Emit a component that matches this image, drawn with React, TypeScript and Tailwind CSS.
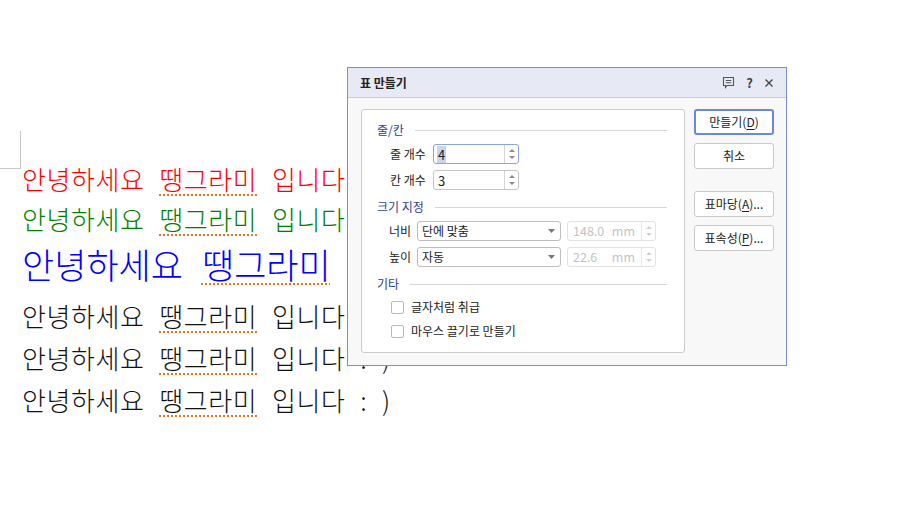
const docFont = { fontFamily: '"Noto Sans CJK KR", "Noto Sans", sans-serif' };

function DocLine({ color, size, className }: { color: string; size: string; className: string }) {
  return (
    <p className={`whitespace-nowrap pl-[22px] [word-spacing:0.32em] ${color} ${size} ${className}`}>
      안녕하세요{' '}
      <span className="underline decoration-dotted decoration-[#e8751a] decoration-[1.5px] underline-offset-[4px]">땡그라미</span>{' '}
      입니다 : )
    </p>
  );
}

function SpinBox({ value, focused }: { value: string; focused?: boolean }) {
  return (
    <div
      className={`flex h-[20px] w-[86px] items-stretch rounded-[3px] border bg-white ${
        focused ? 'border-[#8ea2dc]' : 'border-[#c4c4c4]'
      }`}
    >
      <div className="flex flex-1 items-center pl-[3px] text-[13px] leading-none text-[#222]">
        <span className={focused ? 'bg-[#c7d5f1] px-[1px] py-[2px]' : 'px-[1px]'}>{value}</span>
      </div>
      <SpinArrows />
    </div>
  );
}

function SpinArrows({ faint }: { faint?: boolean }) {
  const c = faint ? '#d0d0d0' : '#8a8a8a';
  return (
    <div className={`flex w-[14px] flex-col items-center justify-center gap-[4px] border-l ${faint ? 'border-[#e6e6e6]' : 'border-[#d4d4d4]'}`}>
      <svg width="6" height="3" viewBox="0 0 6 3"><path d="M0 3 L3 0 L6 3 Z" fill={c} /></svg>
      <svg width="6" height="3" viewBox="0 0 6 3"><path d="M0 0 L3 3 L6 0 Z" fill={c} /></svg>
    </div>
  );
}

function UnitBox({ value }: { value: string }) {
  return (
    <div className="ml-[6px] flex h-[20px] w-[89px] items-stretch rounded-[3px] border border-[#e2e2e2] bg-white">
      <div className="flex flex-1 items-center justify-between pl-[5px] pr-[6px] text-[12.5px] leading-none text-[#c4c4c4]">
        <span>{value}</span>
        <span>mm</span>
      </div>
      <SpinArrows faint />
    </div>
  );
}

function Select({ value }: { value: string }) {
  return (
    <div className="flex h-[20px] w-[144px] items-center justify-between rounded-[3px] border border-[#bdbdbd] bg-white pl-[4px] pr-[5px] text-[12px] leading-none text-[#222]">
      <span>{value}</span>
      <svg width="7" height="4" viewBox="0 0 7 4"><path d="M0 0 L7 0 L3.5 4 Z" fill="#777" /></svg>
    </div>
  );
}

function Section({ title, className }: { title: string; className?: string }) {
  return (
    <div className={`flex h-[16px] items-center pl-[15px] pr-[17px] ${className ?? ''}`}>
      <span className="whitespace-nowrap text-[12px] leading-[16px] text-[#2e418c]">{title}</span>
      <div className="ml-[11px] h-px flex-1 bg-[#d6d6d6]" />
    </div>
  );
}

function Check({ label, className }: { label: string; className?: string }) {
  return (
    <div className={`flex h-[16px] items-center gap-[7px] pl-[29px] ${className ?? ''}`}>
      <div className="h-[13px] w-[13px] shrink-0 rounded-[2px] border border-[#b9b9b9] bg-white" />
      <span className="whitespace-nowrap text-[12px] leading-[16px] text-[#222]">{label}</span>
    </div>
  );
}

function Btn({ children, primary, className }: { children: React.ReactNode; primary?: boolean; className?: string }) {
  return (
    <div
      className={`flex h-[26px] w-[80px] items-center justify-center whitespace-nowrap rounded-[3px] bg-white text-[12px] leading-none text-[#222] ${
        primary ? 'border-2 border-[#6a8ad8]' : 'border border-[#c9c9c9]'
      } ${className ?? ''}`}
    >
      {children}
    </div>
  );
}

export default function App() {
  return (
    <div className="relative h-[511px] w-[910px] overflow-hidden bg-white" style={docFont}>
      {/* page corner guide */}
      <div className="absolute left-0 top-[131px] h-[38px] w-[21px] border-b border-r border-[#c8c8c8]" />

      <div className="flex flex-col pt-[159px] font-light">
        <DocLine color="text-[#ff0000]" size="text-[26px] tracking-[0.6px]" className="h-[40px] leading-[40px]" />
        <DocLine color="text-[#008000]" size="text-[26px] tracking-[0.6px]" className="h-[40px] leading-[40px]" />
        <DocLine color="text-[#0000ff]" size="text-[35px]" className="h-[50px] leading-[50px]" />
        <DocLine color="text-[#111]" size="text-[26px] tracking-[0.6px]" className="mt-[6px] h-[42px] leading-[42px]" />
        <DocLine color="text-[#111]" size="text-[26px] tracking-[0.6px]" className="h-[42px] leading-[42px]" />
        <DocLine color="text-[#111]" size="text-[26px] tracking-[0.6px]" className="h-[42px] leading-[42px]" />
      </div>

      {/* dialog */}
      <div className="absolute left-[347px] top-[67px] flex h-[299px] w-[440px] flex-col border border-[#7a8fd3] bg-[#f8f8f8]">
        <div className="flex h-[30px] shrink-0 items-center justify-between border-b border-[#c5cbe5] bg-[#e7e9f4] pl-[12px] pr-[12px]">
          <span className="text-[12px] font-bold text-[#222]">표 만들기</span>
          <div className="flex items-center gap-[11px] text-[#444]">
            <svg width="13" height="13" viewBox="0 0 13 13" fill="none" stroke="#555" strokeWidth="1.1">
              <path d="M1.5 1.5 H11.5 V9.5 H5 L3.5 11.5 V9.5 H1.5 Z" />
              <path d="M3.8 4.5 H9.2 M3.8 6.8 H9.2" />
            </svg>
            <span className="text-[13px] font-bold leading-none">?</span>
            <svg width="10" height="10" viewBox="0 0 10 10" stroke="#444" strokeWidth="1.3">
              <path d="M1.5 1.5 L8.5 8.5 M8.5 1.5 L1.5 8.5" />
            </svg>
          </div>
        </div>

        <div className="flex flex-1 gap-[9px] pl-[13px] pt-[11px]">
          <div className="flex h-[244px] w-[324px] flex-col rounded-[3px] border border-[#cccccc] bg-white pt-[12px]">
            <Section title="줄/칸" />
            <div className="mt-[6px] flex h-[20px] items-center pl-[28px]">
              <span className="w-[43px] whitespace-nowrap text-[12px] leading-none text-[#222]">줄 개수</span>
              <SpinBox value="4" focused />
            </div>
            <div className="mt-[6px] flex h-[20px] items-center pl-[28px]">
              <span className="w-[43px] whitespace-nowrap text-[12px] leading-none text-[#222]">칸 개수</span>
              <SpinBox value="3" />
            </div>

            <Section title="크기 지정" className="mt-[9px]" />
            <div className="mt-[6px] flex h-[20px] items-center pl-[27px]">
              <span className="w-[28px] whitespace-nowrap text-[12px] leading-none text-[#222]">너비</span>
              <Select value="단에 맞춤" />
              <UnitBox value="148.0" />
            </div>
            <div className="mt-[6px] flex h-[20px] items-center pl-[27px]">
              <span className="w-[28px] whitespace-nowrap text-[12px] leading-none text-[#222]">높이</span>
              <Select value="자동" />
              <UnitBox value="22.6" />
            </div>

            <Section title="기타" className="mt-[9px]" />
            <Check label="글자처럼 취급" className="mt-[7px]" />
            <Check label="마우스 끌기로 만들기" className="mt-[8px]" />
          </div>

          <div className="flex flex-col">
            <Btn primary>
              만들기(<span className="underline underline-offset-2">D</span>)
            </Btn>
            <Btn className="mt-[8px]">취소</Btn>
            <Btn className="mt-[22px]">
              표마당(<span className="underline underline-offset-2">A</span>)...
            </Btn>
            <Btn className="mt-[8px]">
              표속성(<span className="underline underline-offset-2">P</span>)...
            </Btn>
          </div>
        </div>
      </div>
    </div>
  );
}
